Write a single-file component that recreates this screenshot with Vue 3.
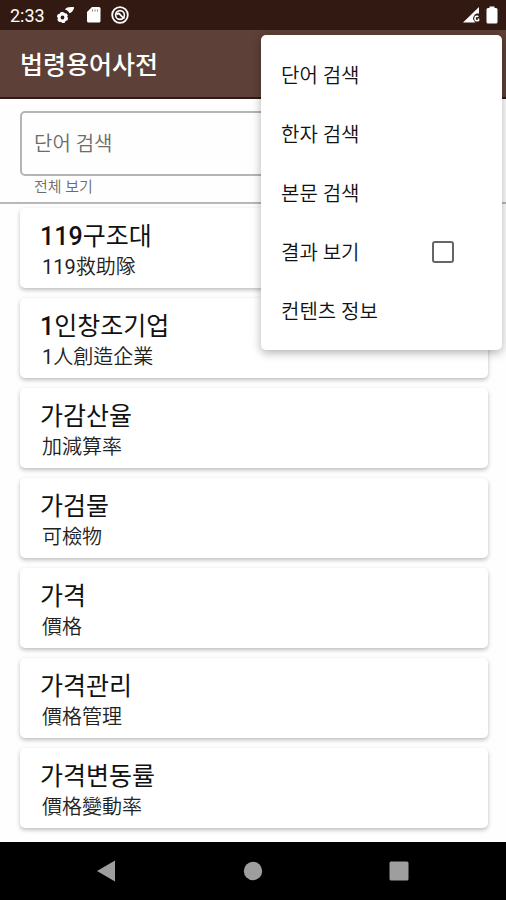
<script setup>
import { ref } from 'vue'

const query = ref('')
const showResults = ref(false)

const entries = [
  { number: '119', term: '구조대', hanja: '救助隊' },
  { number: '1', term: '인창조기업', hanja: '人創造企業' },
  { number: '', term: '가감산율', hanja: '加減算率' },
  { number: '', term: '가검물', hanja: '可檢物' },
  { number: '', term: '가격', hanja: '價格' },
  { number: '', term: '가격관리', hanja: '價格管理' },
  { number: '', term: '가격변동률', hanja: '價格變動率' }
]
</script>

<template>
  <div class="screen">
    <div class="status">
      <span class="time">2:33</span>
      <svg class="gear" width="18" height="18" viewBox="0 0 18 18" aria-hidden="true">
        <path d="M8 3.500C9.500 1.200 12 .8 17.200 1.200C16.500 4.500 14.500 7.200 12.300 7C11.500 5.400 10.800 4.600 8 3.500Z" fill="#fff" />
        <circle cx="5.500" cy="11.500" r="3.400" fill="none" stroke="#fff" stroke-width="3" />
        <circle cx="5.500" cy="11.500" r="4.700" fill="none" stroke="#fff" stroke-width="1.800" stroke-dasharray="2.900 2.020" />
      </svg>
      <svg class="sd" width="14" height="16" viewBox="0 0 14 16" aria-hidden="true">
        <path d="M5 0H12Q13.500 0 13.500 1.500V14Q13.500 15.500 12 15.500H1.500Q0 15.500 0 14V5Z" fill="#fff" />
        <path d="M5.500 2.500V4.500M8 2.500V4.500M10.500 2.500V4.500" stroke="#8a7b77" stroke-width="1" />
      </svg>
      <svg class="ring" width="18" height="18" viewBox="0 0 18 18" aria-hidden="true">
        <circle cx="9" cy="9" r="7.800" fill="none" stroke="#fff" stroke-width="1.800" />
        <circle cx="9" cy="9" r="4.400" fill="none" stroke="#fff" stroke-width="1.600" />
        <path d="M5.500 8.500Q7.500 6.500 9 8.500T13.500 12.500" fill="none" stroke="#fff" stroke-width="1.800" />
      </svg>
      <svg class="signal" width="17" height="16" viewBox="0 0 17 16" aria-hidden="true">
        <path d="M16 0V15.500H0Z" fill="#fff" />
        <path d="M17 6.500H13.500Q10 8.500 10 12L12.500 16H17Z" fill="#321a13" />
        <path d="M15.500 9.500Q12 8.500 12 11.500T15.500 13.500V11.500" fill="none" stroke="#fff" stroke-width="1.600" />
      </svg>
      <svg width="12" height="18" viewBox="0 0 12 18" aria-hidden="true">
        <path d="M3.500 .5H8.500V2H10Q11.500 2 11.500 3.500V16Q11.500 17.500 10 17.500H2Q.5 17.500 .5 16V3.500Q.5 2 2 2H3.500Z" fill="#fff" />
      </svg>
    </div>

    <header class="appbar"><h1>법령용어사전</h1></header>

    <div class="search">
      <input v-model="query" class="field" type="text" placeholder="단어 검색" aria-label="단어 검색" aria-describedby="helper" />
      <p id="helper" class="helper">전체 보기</p>
    </div>

    <main class="list">
      <a v-for="entry in entries" :key="entry.term" class="card" href="#">
        <span class="term"><span v-if="entry.number" class="number">{{ entry.number }}</span>{{ entry.term }}</span>
        <span class="hanja"><span v-if="entry.number" class="count">{{ entry.number }}</span>{{ entry.hanja }}</span>
      </a>
    </main>

    <nav class="navbar">
      <button type="button" aria-label="뒤로">
        <svg width="20" height="22" viewBox="0 0 20 22"><path d="M0 11L18 0.500V21.500Z" fill="#9e9e9e" /></svg>
      </button>
      <button type="button" aria-label="홈">
        <svg width="20" height="20" viewBox="0 0 20 20"><circle cx="10" cy="10" r="9.200" fill="#9e9e9e" /></svg>
      </button>
      <button type="button" aria-label="최근 앱">
        <svg width="20" height="20" viewBox="0 0 20 20"><rect x=".5" y=".5" width="19" height="19" rx="1.500" fill="#9e9e9e" /></svg>
      </button>
    </nav>

    <div class="menu">
      <button type="button" class="item">단어 검색</button>
      <button type="button" class="item">한자 검색</button>
      <button type="button" class="item">본문 검색</button>
      <label class="item">
        <span>결과 보기</span>
        <input v-model="showResults" class="check" type="checkbox" />
      </label>
      <button type="button" class="item">컨텐츠 정보</button>
    </div>
  </div>
</template>

<style>
body {
  margin: 0;
}
</style>

<style scoped>
.screen {
  position: relative;
  display: flex;
  flex-direction: column;
  min-height: 100vh;
  background: #fefefe;
  color: #111;
  font-family: Roboto, "Noto Sans CJK KR", sans-serif;
}
.screen * {
  box-sizing: border-box;
}
button,
input {
  font-family: inherit;
}
.status {
  display: flex;
  align-items: center;
  height: 30px;
  padding: 0 8px 0 10px;
  background: #321a13;
  color: #fff;
}
.time {
  padding-top: 2px;
  font-size: 18px;
  line-height: 28px;
}
.gear {
  margin-left: 12px;
}
.sd {
  margin-left: 12px;
}
.ring {
  margin-left: 10px;
}
.signal {
  margin-left: auto;
  margin-right: 6px;
}
.appbar {
  display: flex;
  align-items: center;
  height: 69px;
  padding: 4px 20px 0;
  background: #5d4037;
  border-bottom: 2px solid #321a13;
}
h1 {
  margin: 0;
  font-size: 25px;
  line-height: 32px;
  font-weight: 500;
  color: #fff;
}
.search {
  padding: 12px 18px 4px 20px;
  border-bottom: 2px solid #b8b8b8;
}
.field {
  display: block;
  width: 100%;
  height: 65px;
  padding: 0 12px;
  border: 2px solid #b4b4b4;
  border-radius: 5px;
  background: transparent;
  font-size: 20px;
  font-weight: 350;
  color: #111;
}
.field::placeholder {
  color: #6c6c6c;
  opacity: 1;
}
.helper {
  margin: 0;
  padding-left: 14px;
  font-size: 15px;
  line-height: 22px;
  font-weight: 350;
  color: #6c6c6c;
}
.list {
  flex: 1;
  display: flex;
  flex-direction: column;
  gap: 10px;
  padding: 4px 18px 12px 20px;
}
.card {
  display: flex;
  flex-direction: column;
  padding: 13px 20px 7px;
  border-radius: 5px;
  background: #fff;
  box-shadow: 0 2px 4px rgba(0, 0, 0, 0.26);
  color: #111;
  text-decoration: none;
}
.term {
  font-size: 25px;
  line-height: 32px;
}
.number {
  font-weight: 500;
}
.hanja {
  padding-left: 2px;
  font-size: 20px;
  line-height: 28px;
  font-weight: 350;
  color: #222;
}
.count {
  font-weight: 400;
}
.navbar {
  display: grid;
  grid-template-columns: repeat(3, 1fr);
  height: 58px;
  padding: 0 34px;
  background: #000;
}
.navbar button {
  display: flex;
  align-items: center;
  justify-content: center;
  padding: 0;
  border: 0;
  background: none;
}
.menu {
  position: absolute;
  top: 35px;
  right: 4px;
  display: flex;
  flex-direction: column;
  width: 241px;
  padding: 10px 0;
  border-radius: 5px;
  background: #fff;
  box-shadow: 0 3px 10px rgba(0, 0, 0, 0.3);
}
.item {
  display: flex;
  align-items: center;
  justify-content: space-between;
  height: 59px;
  padding: 0 48px 0 20px;
  border: 0;
  background: none;
  font-size: 20px;
  font-weight: 350;
  color: #111;
  text-align: left;
}
.check {
  appearance: none;
  width: 22px;
  height: 22px;
  margin: 0;
  border: 2px solid #666;
  border-radius: 3px;
  background: #fff;
}
.check:checked {
  background: #5d4037;
}
</style>
